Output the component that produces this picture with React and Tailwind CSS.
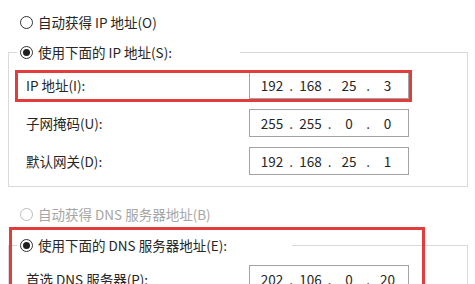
import React from "react";

const FONT = { fontFamily: '"Noto Sans CJK SC", "Noto Sans", sans-serif' };

function Radio({ checked, disabled }) {
  return (
    <span
      className={
        "w-[13px] h-[13px] rounded-full border flex items-center justify-center shrink-0 bg-white " +
        (disabled ? "border-[#bcbcbc]" : "border-[#333333]")
      }
    >
      {checked && <span className="w-[7px] h-[7px] rounded-full bg-[#1f1f1f]" />}
    </span>
  );
}

function IpField({ parts }) {
  return (
    <div className="w-[160px] h-[28px] border border-[#a3a3a3] bg-white flex items-center pl-[5px] text-[13.5px] text-[#262626]">
      {parts.map((p, i) => (
        <React.Fragment key={i}>
          {i > 0 && <span className="w-[4.5px] text-center">.</span>}
          <span className="w-[34px] text-center">{p}</span>
        </React.Fragment>
      ))}
    </div>
  );
}

function Row({ label, parts }) {
  return (
    <div className="flex items-center h-[28px]">
      <div className="w-[240px] pl-[17px] text-[13.5px] text-[#262626]">{label}</div>
      <IpField parts={parts} />
    </div>
  );
}

export default function App() {
  return (
    <div
      className="relative w-[475px] h-[284px] bg-white overflow-hidden text-[13.5px] text-[#262626]"
      style={FONT}
    >
      <div className="flex items-center h-[20px] mt-[12px] pl-[20px] gap-[5px]">
        <Radio />
        <span>自动获得 IP 地址(O)</span>
      </div>

      <fieldset className="ml-[8px] w-[460px] mt-[10px] border border-[#d9d9d9] pb-[11px]">
        <legend className="ml-[8px] w-[223px] h-[20px]">
          <div className="flex items-center h-[20px] pl-[3px] gap-[5px]">
            <Radio checked />
            <span>使用下面的 IP 地址(S):</span>
          </div>
        </legend>
        <div className="flex flex-col gap-[10px] mt-[9px]">
          <Row label="IP 地址(I):" parts={["192", "168", "25", "3"]} />
          <Row label="子网掩码(U):" parts={["255", "255", "0", "0"]} />
          <Row label="默认网关(D):" parts={["192", "168", "25", "1"]} />
        </div>
      </fieldset>

      <div className="flex items-center h-[20px] mt-[17px] pl-[20px] gap-[5px] text-[#a6a6a6]">
        <Radio disabled />
        <span>自动获得 DNS 服务器地址(B)</span>
      </div>

      <fieldset className="ml-[8px] w-[460px] mt-[11px] border border-[#d9d9d9] pb-[11px]">
        <legend className="ml-[8px] w-[275px] h-[20px]">
          <div className="flex items-center h-[20px] pl-[3px] gap-[5px]">
            <Radio checked />
            <span>使用下面的 DNS 服务器地址(E):</span>
          </div>
        </legend>
        <div className="flex flex-col gap-[10px] mt-[10px]">
          <Row label="首选 DNS 服务器(P):" parts={["202", "106", "0", "20"]} />
        </div>
      </fieldset>

      <div className="absolute left-[15px] top-[70px] w-[397px] h-[32px] border-[3px] border-[#e23c3c] pointer-events-none" />
      <div className="absolute left-[9px] top-[227px] w-[416px] h-[120px] border-[3px] border-[#e23c3c] pointer-events-none" />
    </div>
  );
}
